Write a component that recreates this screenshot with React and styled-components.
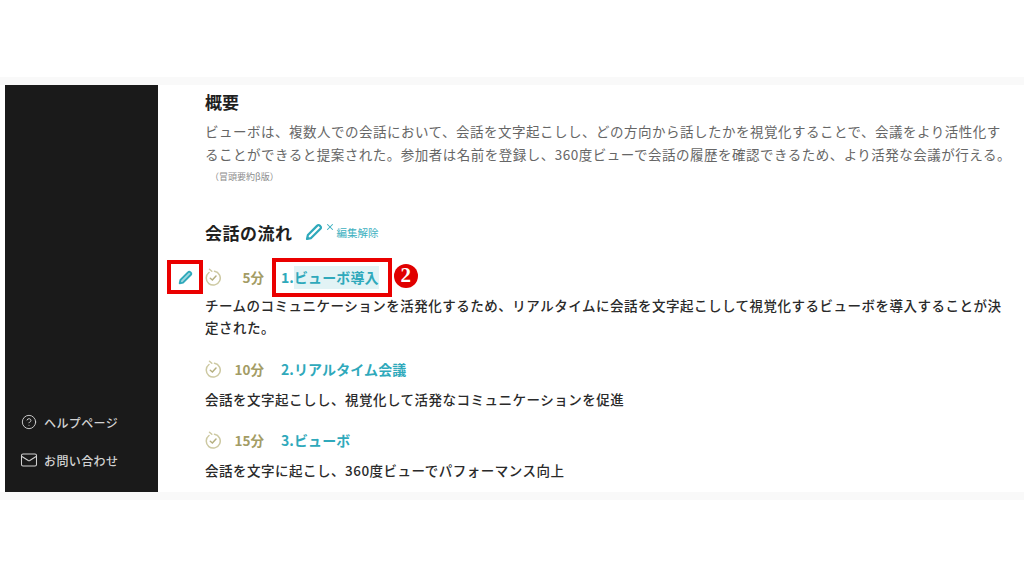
import React from 'react';
import styled, {createGlobalStyle} from 'styled-components';
import {CircleHelp, Mail, X} from 'lucide-react';

const GlobalStyle = createGlobalStyle`
    html, body {
        margin: 0;
        padding: 0;
        background-color: #FFFFFF;
    }
    body {
        font-family: 'Noto Sans CJK JP', 'Noto Sans', sans-serif;
    }
`

const Page = styled.div`
    width: 1024px;
    height: 576px;
    box-sizing: border-box;
    padding-top: 77px;
    overflow: hidden;
`

const Strip = styled.div`
    height: 8px;
    background-color: #F9F9F9;
`

const Body = styled.div`
    display: flex;
    height: 407px;
    padding-left: 5px;
`

const Sidebar = styled.nav`
    width: 153px;
    flex: none;
    box-sizing: border-box;
    display: flex;
    flex-direction: column;
    justify-content: flex-end;
    gap: 16px;
    padding: 0 0 21px 15px;
    background-color: #1A1A1A;
`

const SideLink = styled.div`
    display: flex;
    align-items: center;
    gap: 6px;
    height: 22px;
    color: #D2D2D2;
    font-size: 12px;
    letter-spacing: 0.4px;
    font-weight: 500;
`

const IconSlot = styled.span`
    width: 18px;
    display: flex;
    justify-content: center;
`

const Main = styled.main`
    flex: 1;
    padding-left: 9px;
    min-width: 0;
`

const Section = styled.section`
    padding-left: 38px;
`

const Title = styled.h2`
    margin: 0;
    color: #1F1F1F;
    font-size: 17px;
    font-weight: 700;
    line-height: 24px;
    padding-top: 5px;
`

const Summary = styled.p`
    margin: 6px 0 0;
    width: 808px;
    color: #666666;
    font-size: 13.5px;
    letter-spacing: 0.5px;
    line-height: 23px;
`

const Note = styled.div`
    margin: 4px 0 0 5px;
    color: #8C8C8C;
    font-size: 9px;
    line-height: 14px;
`

const FlowHead = styled.div`
    display: flex;
    align-items: center;
    gap: 12px;
    margin-top: 36px;
    height: 24px;
`

const FlowTitle = styled.h2`
    margin: 0;
    color: #1F1F1F;
    font-size: 17px;
    letter-spacing: 0.5px;
    font-weight: 700;
`

const EditToggle = styled.div`
    position: relative;
    display: flex;
    align-items: center;
    gap: 14px;
    color: #3DB0C0;
    font-size: 10.5px;
`

const SmallX = styled(X)`
    position: absolute;
    left: 20px;
    top: -1px;
`

const PencilSvg = styled.svg`
    flex: none;
    width: ${p => p.$size}px;
    height: ${p => p.$size}px;
`

const Row = styled.div`
    display: flex;
    align-items: center;
    height: 34px;
    margin-top: ${p => p.$top}px;
    padding-left: ${p => p.$inset || 0}px;
`

const EditBox = styled.div`
    width: 36px;
    height: 34px;
    box-sizing: border-box;
    flex: none;
    display: flex;
    align-items: center;
    justify-content: center;
    margin-right: 2px;
    border: 4px solid #EA0000;
`

const Clock = styled.svg`
    width: 16px;
    height: 18px;
    flex: none;
`

const Minutes = styled.span`
    width: 43px;
    flex: none;
    text-align: right;
    color: #A39C64;
    font-size: 13.5px;
    font-weight: 700;
`

const Topic = styled.div`
    margin-left: ${p => (p.$boxed ? 8 : 17)}px;
    box-sizing: border-box;
    flex: none;
    display: flex;
    align-items: center;
    height: 39px;
    padding: ${p => (p.$boxed ? '0 9px 0 5px' : '0')};
    border: ${p => (p.$boxed ? '4px solid #EA0000' : 'none')};
    color: #2FA9BB;
    font-size: 14px;
    font-weight: 700;
    letter-spacing: 0.1px;
`

const Hilite = styled.span`
    display: block;
    line-height: 23px;
    background-color: #E2F3F5;
`

const Badge = styled.span`
    width: 24px;
    height: 24px;
    flex: none;
    margin: 0 0 3px 2px;
    border-radius: 50%;
    display: flex;
    align-items: center;
    justify-content: center;
    background-color: #E00000;
    color: #FFFFFF;
    font-family: 'Liberation Serif', serif;
    font-size: 21px;
    font-weight: 700;
`

const Detail = styled.p`
    margin: ${p => p.$top}px 0 0;
    width: 808px;
    color: #2A2A2A;
    font-size: 13.5px;
    font-weight: 500;
    letter-spacing: 0.5px;
    line-height: 22px;
`

const ClockIcon = () => (
    <Clock viewBox="0 0 16 18" fill="none" stroke="#CDC9A2" strokeWidth="1.5" strokeLinecap="round">
        <path d="M9.5 3.2A7 7 0 1 1 4 4.5"/>
        <path d="M4.5 1.2 6.8 3.2"/>
        <path d="M5.3 10.2 7.4 12 11 8" stroke="#B5AF80"/>
    </Clock>
);

const PencilIcon = ({size, fill}) => (
    <PencilSvg $size={size} viewBox="0 0 16 16" fill="none" stroke="#2FA9BB" strokeWidth="2" strokeLinejoin="round">
        <path d="M1.8 14.2 2.6 10.6 10.9 2.3a1.5 1.5 0 0 1 2.2 0l.6.6a1.5 1.5 0 0 1 0 2.2L5.4 13.4Z" fill={fill}/>
    </PencilSvg>
);

const AGENDA = [
    {min: '10分', title: '2.リアルタイム会議', text: '会話を文字起こしし、視覚化して活発なコミュニケーションを促進'},
    {min: '15分', title: '3.ビューボ', text: '会話を文字に起こし、360度ビューでパフォーマンス向上'},
];

const App = () => {
    return (
        <Page>
            <GlobalStyle/>
            <Strip/>
            <Body>
                <Sidebar>
                    <SideLink><IconSlot><CircleHelp size={16} strokeWidth={1.4}/></IconSlot>ヘルプページ</SideLink>
                    <SideLink><IconSlot><Mail size={18} strokeWidth={1.4}/></IconSlot>お問い合わせ</SideLink>
                </Sidebar>
                <Main>
                    <Section>
                        <Title>概要</Title>
                        <Summary>
                            ビューボは、複数人での会話において、会話を文字起こしし、どの方向から話したかを視覚化することで、会議をより活性化することができると提案された。参加者は名前を登録し、360度ビューで会話の履歴を確認できるため、より活発な会議が行える。
                        </Summary>
                        <Note>（冒頭要約β版）</Note>
                        <FlowHead>
                            <FlowTitle>会話の流れ</FlowTitle>
                            <EditToggle>
                                <PencilIcon size={18} fill="#FFFFFF"/>
                                <SmallX size={10} strokeWidth={2.5}/>
                                編集解除
                            </EditToggle>
                        </FlowHead>
                    </Section>
                    <Row $top={16}>
                        <EditBox><PencilIcon size={15} fill="#9ED8E0"/></EditBox>
                        <ClockIcon/>
                        <Minutes>5分</Minutes>
                        <Topic $boxed>1.<Hilite>ビューボ導入</Hilite></Topic>
                        <Badge>2</Badge>
                    </Row>
                    <Section>
                        <Detail $top={0}>
                            チームのコミュニケーションを活発化するため、リアルタイムに会話を文字起こしして視覚化するビューボを導入することが決定された。
                        </Detail>
                    </Section>
                    {AGENDA.map(item => (
                        <React.Fragment key={item.title}>
                            <Row $top={13.5} $inset={38}>
                                <ClockIcon/>
                                <Minutes>{item.min}</Minutes>
                                <Topic>{item.title}</Topic>
                            </Row>
                            <Section>
                                <Detail $top={2}>{item.text}</Detail>
                            </Section>
                        </React.Fragment>
                    ))}
                </Main>
            </Body>
            <Strip/>
        </Page>
    );
}

export default App;
